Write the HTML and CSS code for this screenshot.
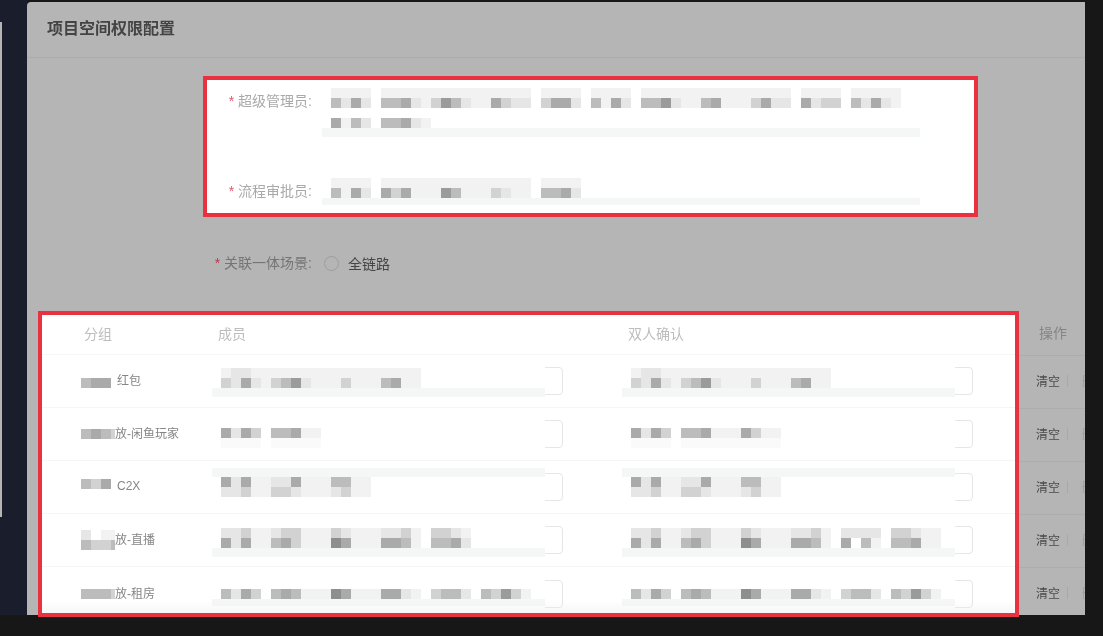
FILE: index.html
```html
<!DOCTYPE html>
<html lang="zh-CN">

<head>
    <meta charset="UTF-8">
    <meta name="viewport" content="width=device-width, initial-scale=1.0">
    <title>项目空间权限配置</title>
    <link rel="stylesheet" href="styles.css">
</head>

<body>
    <div class="page">
        <div class="side">
            <div class="side-edge"></div>
        </div>
        <div class="modal">
            <div class="modal-head">项目空间权限配置</div>

            <div class="mark form-mark">
                <div class="form-row">
                    <label class="form-label"><i>*</i>超级管理员:</label>
                    <div class="form-value">
                        <div class="mosaic line-gap" data-cells="1111.111111111111111.1111.1111.111111111111111.1111.11111|4252.445213642115322.3552.4152.446211451113522.5233.42521"></div>
                        <div class="mosaic" data-cells="5142.44521"></div>
                        <div class="band"></div>
                    </div>
                </div>
                <div class="form-row">
                    <label class="form-label"><i>*</i>流程审批员:</label>
                    <div class="form-value">
                        <div class="mosaic" data-cells="1111.111111111111111.1111|4152.535111641113211.4452"></div>
                        <div class="band band-thin"></div>
                    </div>
                </div>
            </div>

            <div class="radio-row">
                <label class="form-label"><i>*</i>关联一体场景:</label>
                <span class="radio"></span>
                <span class="radio-text">全链路</span>
            </div>

            <div class="table-wrap">
                <div class="mark table-mark">
                    <div class="table-row table-head">
                        <div class="th-group">分组</div>
                        <div class="th">成员</div>
                        <div class="th">双人确认</div>
                    </div>

                    <div class="table-row">
                        <div class="group">
                            <div class="group-mosaic down" data-cells="455"></div>
                            <span class="group-text short">红包</span>
                        </div>
                        <div class="field">
                            <div class="cover top-7">
                                <div class="mosaic" data-cells="12211111111111111111|32521346211131114511"></div>
                                <div class="band"></div>
                            </div>
                        </div>
                        <div class="field">
                            <div class="cover top-7">
                                <div class="mosaic" data-cells="12211111111111111111|32521346211131114511"></div>
                                <div class="band"></div>
                            </div>
                        </div>
                    </div>

                    <div class="table-row">
                        <div class="group">
                            <div class="group-mosaic" data-cells="4543"></div>
                            <span class="group-text">放-闲鱼玩家</span>
                        </div>
                        <div class="field">
                            <div class="cover top-14">
                                <div class="mosaic" data-cells="5253.44511|0000.00000"></div>
                            </div>
                        </div>
                        <div class="field">
                            <div class="cover top-14">
                                <div class="mosaic" data-cells="5253.4451115311|0000.0000000000"></div>
                            </div>
                        </div>
                    </div>

                    <div class="table-row">
                        <div class="group">
                            <div class="group-mosaic up" data-cells="435"></div>
                            <span class="group-text short">C2X</span>
                        </div>
                        <div class="field">
                            <div class="cover top-1">
                                <div class="band"></div>
                                <div class="mosaic" data-cells="525112251114411|223113321112311"></div>
                            </div>
                        </div>
                        <div class="field">
                            <div class="cover top-1">
                                <div class="band"></div>
                                <div class="mosaic" data-cells="525112251114411|223113321112311"></div>
                            </div>
                        </div>
                    </div>

                    <div class="table-row">
                        <div class="group">
                            <div class="group-mosaic" data-cells="2.11|4334"></div>
                            <span class="group-text">放-直播</span>
                        </div>
                        <div class="field">
                            <div class="cover top-8">
                                <div class="mosaic" data-cells="22311233111321112231.3321|52511453111751115541.4452"></div>
                                <div class="band"></div>
                            </div>
                        </div>
                        <div class="field">
                            <div class="cover top-8">
                                <div class="mosaic" data-cells="22311233111321112231.2222.33211|52511453111751115541.5.41.44511"></div>
                                <div class="band"></div>
                            </div>
                        </div>
                    </div>

                    <div class="table-row last">
                        <div class="group">
                            <div class="group-mosaic" data-cells="4443"></div>
                            <span class="group-text">放-租房</span>
                        </div>
                        <div class="field">
                            <div class="cover top-15">
                                <div class="mosaic" data-cells="4253.454111751115521.3442.43631"></div>
                                <div class="band band-thin"></div>
                            </div>
                        </div>
                        <div class="field">
                            <div class="cover top-15">
                                <div class="mosaic" data-cells="4253.454111751115521.3442.43631"></div>
                                <div class="band band-thin"></div>
                            </div>
                        </div>
                    </div>
                </div>

                <div class="ops">
                    <div class="ops-head">操作</div>
                    <div class="ops-row"><a>清空</a><span class="ops-line"></span><a class="ops-more">删除</a></div>
                    <div class="ops-row"><a>清空</a><span class="ops-line"></span><a class="ops-more">删除</a></div>
                    <div class="ops-row"><a>清空</a><span class="ops-line"></span><a class="ops-more">删除</a></div>
                    <div class="ops-row"><a>清空</a><span class="ops-line"></span><a class="ops-more">删除</a></div>
                    <div class="ops-row"><a>清空</a><span class="ops-line"></span><a class="ops-more">删除</a></div>
                </div>
            </div>
        </div>
    </div>
    <script src="script.js"></script>
</body>

</html>
```

FILE: styles.css
```css
* {
    padding: 0;
    margin: 0;
    box-sizing: border-box;
}

body {
    height: 636px;
    overflow: hidden;
    background: #171717;
    font-family: "Liberation Sans", "Noto Sans CJK SC", sans-serif;
    font-size: 14px;
}

.page {
    display: flex;
    height: 615px;
    padding-right: 18px;
}

.side {
    width: 27px;
    background: #1a1d2b;
    padding-top: 22px;
}

.side-edge {
    width: 2px;
    height: 495px;
    background: #b5b5b5;
}

.modal {
    flex: 1;
    margin-top: 2px;
    background: #b5b5b5;
    border-top-left-radius: 4px;
}

.modal-head {
    height: 56px;
    padding: 0 20px;
    line-height: 54px;
    font-size: 16px;
    font-weight: 700;
    color: #444;
    border-bottom: 1px solid #acacac;
}

.modal-head,
.form-label,
.radio-text,
.th,
.th-group,
.group-text,
.ops a,
.ops-head {
    filter: blur(0.4px);
}

.mark {
    background: #fff;
    border: 4px solid #e8323f;
}

/* form */

.form-mark {
    width: 775px;
    height: 141px;
    margin: 18px 0 0 176px;
    padding-top: 8px;
}

.form-row {
    display: flex;
    margin-bottom: 41px;
}

.form-label {
    flex: none;
    width: 105px;
    padding-top: 3px;
    line-height: 20px;
    font-size: 14px;
    text-align: right;
    color: #a9a9a9;
}

.form-label i {
    margin-right: 4px;
    font-style: normal;
    color: #dc5a6c;
}

.form-value {
    margin-left: 10px;
}

.form-value .mosaic {
    margin-left: 9px;
}

.line-gap {
    margin-bottom: 10px;
}

.band {
    width: 598px;
    height: 9px;
    background: #f5f6f6;
}

.band-thin {
    height: 7px;
}

/* mosaic cells built by script.js */

.mosaic,
.group-mosaic {
    display: flex;
    flex-direction: column;
}

.cell-row {
    display: flex;
    height: 10px;
}

.cell-row span {
    flex: none;
    width: 10px;
    height: 10px;
}

.c0 { background: #fafafa; }
.c1 { background: #f2f2f2; }
.c2 { background: #e6e6e6; }
.c3 { background: #d2d2d2; }
.c4 { background: #bcbcbc; }
.c5 { background: #aaaaaa; }
.c6 { background: #9b9b9b; }
.c7 { background: #8e8e8e; }

/* radio */

.radio-row {
    display: flex;
    align-items: center;
    height: 20px;
    margin: 36px 0 38px 180px;
}

.radio-row .form-label {
    padding-top: 0;
    color: #757575;
}

.radio-row .form-label i {
    color: #a8404f;
}

.radio {
    width: 15px;
    height: 15px;
    margin: 0 9px 0 12px;
    border: 1px solid #9d9d9d;
    border-radius: 50%;
}

.radio-text {
    color: #454545;
}

/* table */

.table-wrap {
    display: flex;
    margin-left: 11px;
}

.table-mark {
    position: relative;
    flex: none;
    width: 981px;
    height: 306px;
    overflow: hidden;
}

.table-mark::after {
    content: "";
    position: absolute;
    left: 0;
    right: 0;
    bottom: 0;
    height: 12px;
    background: linear-gradient(rgba(238, 238, 238, 0), rgba(238, 238, 238, 0.5));
}

.table-row {
    display: grid;
    grid-template-columns: 170px 410px 351px;
    align-items: center;
    height: 53px;
    border-bottom: 1px solid #f6f6f6;
}

.table-row.last {
    border-bottom: none;
}

.table-head {
    height: 40px;
    padding-bottom: 4px;
    font-size: 14px;
    color: #bdbdbd;
}

.th-group {
    padding-left: 42px;
}

.th {
    padding-left: 6px;
}

.group {
    display: flex;
    align-items: center;
    padding-left: 39px;
}

.group-mosaic {
    flex: none;
    width: 34px;
    overflow: hidden;
}

.group-mosaic.down {
    margin-top: 3px;
}

.group-mosaic.up {
    margin-bottom: 6px;
}

.group-text {
    margin-bottom: 3px;
    font-size: 12px;
    color: #858585;
    white-space: nowrap;
}

.group-text.short {
    margin-left: 2px;
}

.field {
    position: relative;
    width: 351px;
    height: 28px;
    border: 1px solid #e6e6e6;
    border-radius: 4px;
}

/* blurred value lies over the input and hides most of its border */
.cover {
    position: absolute;
    left: -1px;
    top: -7px;
    width: 333px;
    height: 40px;
    background: #fff;
    overflow: hidden;
}

.cover .mosaic {
    margin-left: 9px;
}

.cover .band {
    width: 100%;
}

.top-1 { padding-top: 1px; }
.top-7 { padding-top: 7px; }
.top-8 { padding-top: 8px; }
.top-14 { padding-top: 14px; }
.top-15 { padding-top: 15px; }

/* action column */

.ops {
    flex: none;
    width: 66px;
    height: 302px;
    overflow: hidden;
    font-size: 12px;
    color: #4a4a4a;
}

.ops-head {
    height: 44px;
    padding: 0 0 0 20px;
    line-height: 44px;
    font-size: 14px;
    color: #858585;
    white-space: nowrap;
}

.ops-row {
    display: flex;
    align-items: center;
    height: 53px;
    padding: 0 0 3px 17px;
    border-top: 1px solid #adadad;
    white-space: nowrap;
}

.ops-line {
    flex: none;
    width: 1px;
    height: 12px;
    margin: 0 14px 0 7px;
    background: #a9a9a9;
}

.ops-more {
    flex: none;
    color: #9c9c9c;
}
```

FILE: script.js
```js
// turn data-cells="12.3|45" into rows of little grey squares
const blocks = document.querySelectorAll('[data-cells]')
blocks.forEach(block => {
    block.dataset.cells.split('|').forEach(line => {
        const row = document.createElement('div')
        row.className = 'cell-row'
        for (const ch of line) {
            const cell = document.createElement('span')
            if (ch != '.') {
                cell.className = 'c' + ch
            }
            row.appendChild(cell)
        }
        block.appendChild(row)
    })
})
```
